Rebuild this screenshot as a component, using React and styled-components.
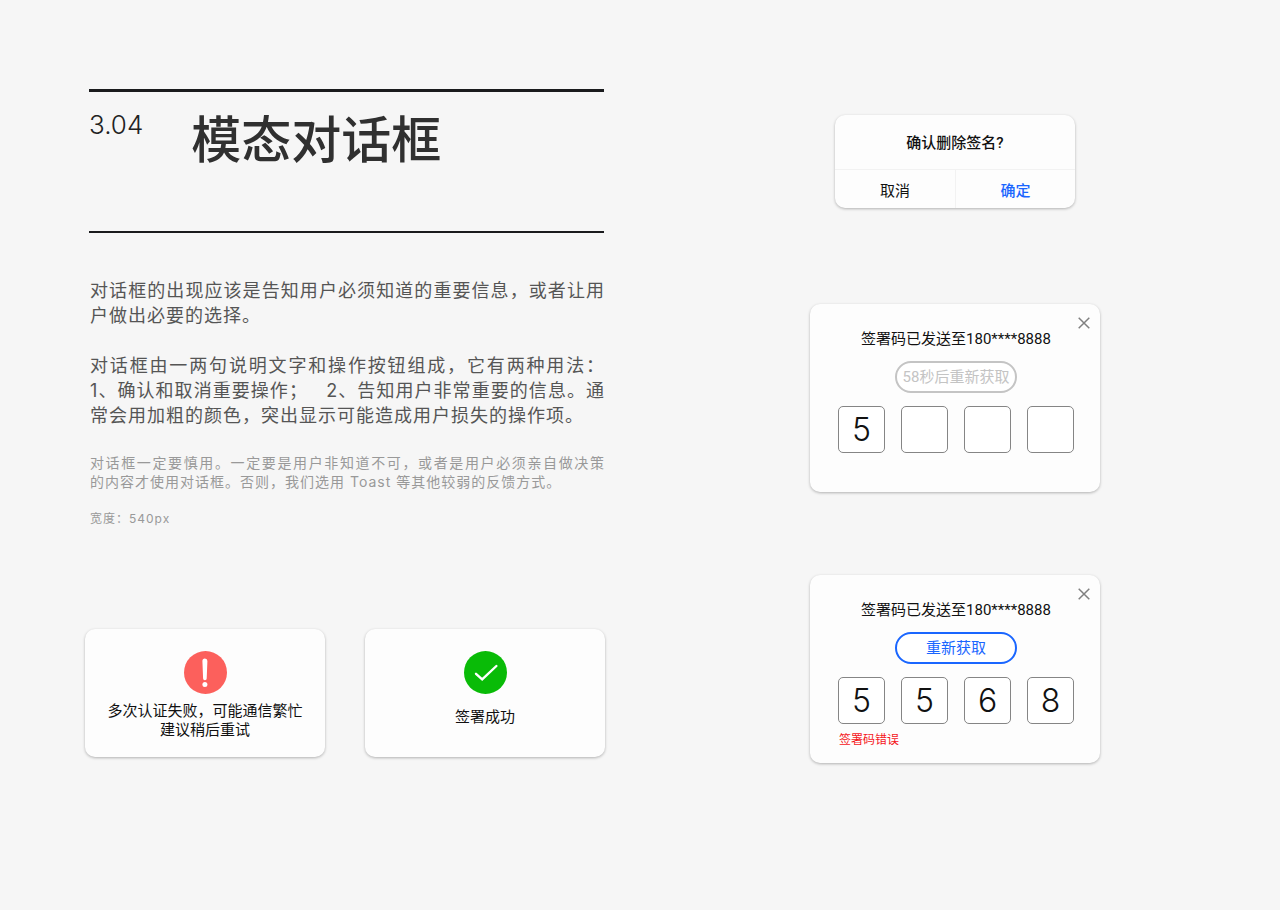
import React from 'react';
import styled, { createGlobalStyle } from 'styled-components';

const CODE_LENGTH = 4;

const App = () => {
  return (
    <React.Fragment>
      <GlobalStyle />
      <Page>
        <Article>
          <Header>
            <Chapter>3.04</Chapter>
            <Title>模态对话框</Title>
          </Header>

          <Content>
            <Text>
              对话框的出现应该是告知用户必须知道的重要信息，或者让用户做出必要的选择。
            </Text>
            <Text>
              对话框由一两句说明文字和操作按钮组成，它有两种用法：1、确认和取消重要操作；&nbsp;&nbsp;
              2、告知用户非常重要的信息。通常会用加粗的颜色，突出显示可能造成用户损失的操作项。
            </Text>
            <Note>
              对话框一定要慎用。一定要是用户非知道不可，或者是用户必须亲自做决策
              <Keep>的内容</Keep>才使用对话框。否则，我们选用 Toast
              等其他较弱的反馈方式。
            </Note>
          </Content>
          <Meta>宽度：540px</Meta>

          <ResultList>
            <ResultCard>
              <FailIcon />
              <Message>
                多次认证失败，可能通信繁忙
                <br />
                建议稍后重试
              </Message>
            </ResultCard>
            <ResultCard $roomy>
              <SuccessIcon />
              <Message>签署成功</Message>
            </ResultCard>
          </ResultList>
        </Article>

        <Examples>
          <ConfirmDialog />
          <CodeDialog name='wait' code='5'>
            <Resend type='button' disabled>
              58秒后重新获取
            </Resend>
          </CodeDialog>
          <CodeDialog name='retry' code='5568' error='签署码错误'>
            <Resend type='button'>重新获取</Resend>
          </CodeDialog>
        </Examples>
      </Page>
    </React.Fragment>
  );
};

const ConfirmDialog = () => (
  <Confirm role='dialog' aria-labelledby='confirm-title'>
    <ConfirmTitle id='confirm-title'>确认删除签名?</ConfirmTitle>
    <Actions>
      <Action type='button'>取消</Action>
      <Action type='button' $primary>
        确定
      </Action>
    </Actions>
  </Confirm>
);

const CodeDialog = ({ name, code, error, children }) => (
  <CodeCard role='dialog' aria-labelledby={`${name}-title`}>
    <Close type='button' aria-label='关闭'>
      <svg width='12' height='12' viewBox='0 0 12 12' aria-hidden='true'>
        <path d='M.7.7l10.6 10.6M11.3.7L.7 11.3' stroke='#808080' strokeWidth='1.5' />
      </svg>
    </Close>
    <CodeTitle id={`${name}-title`}>签署码已发送至180****8888</CodeTitle>
    {children}
    <CodeRow>
      {Array.from({ length: CODE_LENGTH }, (_, i) => (
        <CodeInput
          key={i}
          id={`${name}-${i}`}
          aria-label={`签署码第${i + 1}位`}
          inputMode='numeric'
          maxLength={1}
          defaultValue={code[i] || ''}
        />
      ))}
    </CodeRow>
    {error && <ErrorText>{error}</ErrorText>}
  </CodeCard>
);

const FailIcon = () => (
  <svg width='43' height='43' viewBox='0 0 43 43' aria-hidden='true'>
    <circle cx='21.5' cy='21.5' r='21.5' fill='#fc605c' />
    <path
      d='M18.4 10a2.5 2.5 0 0 1 5 0l-.7 17.4a1.8 1.8 0 0 1-3.6 0z'
      fill='#fff'
    />
    <circle cx='20.9' cy='33.5' r='2.5' fill='#fff' />
  </svg>
);

const SuccessIcon = () => (
  <svg width='43' height='43' viewBox='0 0 43 43' aria-hidden='true'>
    <circle cx='21.5' cy='21.5' r='21.5' fill='#09bb07' />
    <path
      d='M12 22.8l6.2 5.6L32.4 15'
      fill='none'
      stroke='#fff'
      strokeWidth='2.4'
      strokeLinecap='round'
    />
  </svg>
);

const GlobalStyle = createGlobalStyle`
  * {
    box-sizing: border-box;
  }

  body {
    margin: 0;
    background: #f6f6f6;
    color: #111;
    font-family: Roboto, 'Noto Sans CJK SC', sans-serif;
    font-weight: 400;
  }

  h1, h2, p {
    margin: 0;
    font-weight: inherit;
  }

  button, input {
    font: inherit;
    color: inherit;
  }
`;

const Page = styled.main`
  display: grid;
  grid-template-columns: minmax(0, 520px) 1fr;
  gap: 110px;
  padding: 89px 85px;
`;

const Article = styled.article`
  display: flex;
  flex-direction: column;
`;

const Header = styled.header`
  display: flex;
  align-items: flex-start;
  gap: 48px;
  min-height: 144px;
  margin: 0 1px 0 4px;
  padding-top: 17px;
  border-top: 3px solid #1a1b1d;
  border-bottom: 2px solid #1a1b1d;
`;

const Chapter = styled.span`
  font-family: Inter, sans-serif;
  font-size: 26px;
  line-height: 32px;
  font-weight: 300;
  color: #222;
`;

const Title = styled.h1`
  font-size: 50px;
  line-height: 64px;
  font-weight: 500;
  color: #303030;
`;

const Content = styled.section`
  display: flex;
  flex-direction: column;
  gap: 25px;
  margin-top: 45px;
  padding-left: 5px;
  text-align: justify;
`;

const Text = styled.p`
  font-family: Inter, 'Noto Sans CJK SC', sans-serif;
  font-size: 18px;
  line-height: 25px;
  letter-spacing: 1px;
  color: #555;
`;

const Note = styled(Text)`
  font-size: 14px;
  line-height: 19px;
  color: #999;
`;

const Keep = styled.span`
  white-space: nowrap;
`;

const Meta = styled(Note)`
  margin-top: 18px;
  padding-left: 5px;
  font-size: 12px;
`;

const ResultList = styled.div`
  display: grid;
  grid-template-columns: 1fr 1fr;
  gap: 40px;
  margin-top: 101px;
`;

const Card = styled.section`
  border-radius: 10px;
  background: #fdfdfd;
  box-shadow: 0 1px 3px rgba(0, 0, 0, 0.28);
`;

const ResultCard = styled(Card)`
  display: flex;
  flex-direction: column;
  align-items: center;
  gap: ${(props) => (props.$roomy ? '14px' : '8px')};
  min-height: 128px;
  padding-top: 22px;
`;

const Message = styled.p`
  font-size: 15px;
  line-height: 19px;
  text-align: center;
  white-space: nowrap;
`;

const Examples = styled.div`
  display: flex;
  flex-direction: column;
  align-items: center;
  padding-top: 26px;
`;

const Confirm = styled(Card)`
  width: 240px;
  margin-bottom: 96px;
`;

const ConfirmTitle = styled.h2`
  padding: 18px 0 16px;
  font-size: 15px;
  line-height: 20px;
  font-weight: 500;
  text-align: center;
`;

const Actions = styled.div`
  display: grid;
  grid-template-columns: 1fr 1fr;
  border-top: 1px solid #f2f2f2;
`;

const Action = styled.button`
  height: 38px;
  padding: 0;
  border: none;
  background: none;
  font-size: 15px;
  font-weight: ${(props) => (props.$primary ? 500 : 400)};
  color: ${(props) => (props.$primary ? '#1a66ff' : '#111')};

  & + & {
    border-left: 1px solid #f2f2f2;
  }
`;

const CodeCard = styled(Card)`
  position: relative;
  display: flex;
  flex-direction: column;
  align-items: center;
  width: 290px;
  min-height: 188px;
  padding: 25px 26px 0 28px;

  & + & {
    margin-top: 83px;
  }
`;

const Close = styled.button`
  position: absolute;
  top: 13px;
  right: 10px;
  display: flex;
  padding: 0;
  border: none;
  background: none;
`;

const CodeTitle = styled.h2`
  font-size: 15px;
  line-height: 20px;
`;

const Resend = styled.button`
  width: 122px;
  height: 32px;
  margin: 12px 0 13px;
  padding: 0;
  border: 2px solid #1a66ff;
  border-radius: 16px;
  background: #fff;
  font-size: 15px;
  line-height: 20px;
  color: #1a66ff;

  &:disabled {
    border-color: #c4c4c4;
    color: #c4c4c4;
  }
`;

const CodeRow = styled.div`
  display: flex;
  justify-content: space-between;
  width: 100%;
`;

const CodeInput = styled.input`
  width: 47px;
  height: 47px;
  padding: 0;
  border: 1px solid #858585;
  border-radius: 5px;
  background: #fff;
  font-family: Inter, sans-serif;
  font-size: 32px;
  font-weight: 300;
  text-align: center;
`;

const ErrorText = styled.p`
  align-self: flex-start;
  margin-top: 8px;
  padding-left: 1px;
  font-size: 12px;
  line-height: 16px;
  color: #f5151b;
`;

export default App;
